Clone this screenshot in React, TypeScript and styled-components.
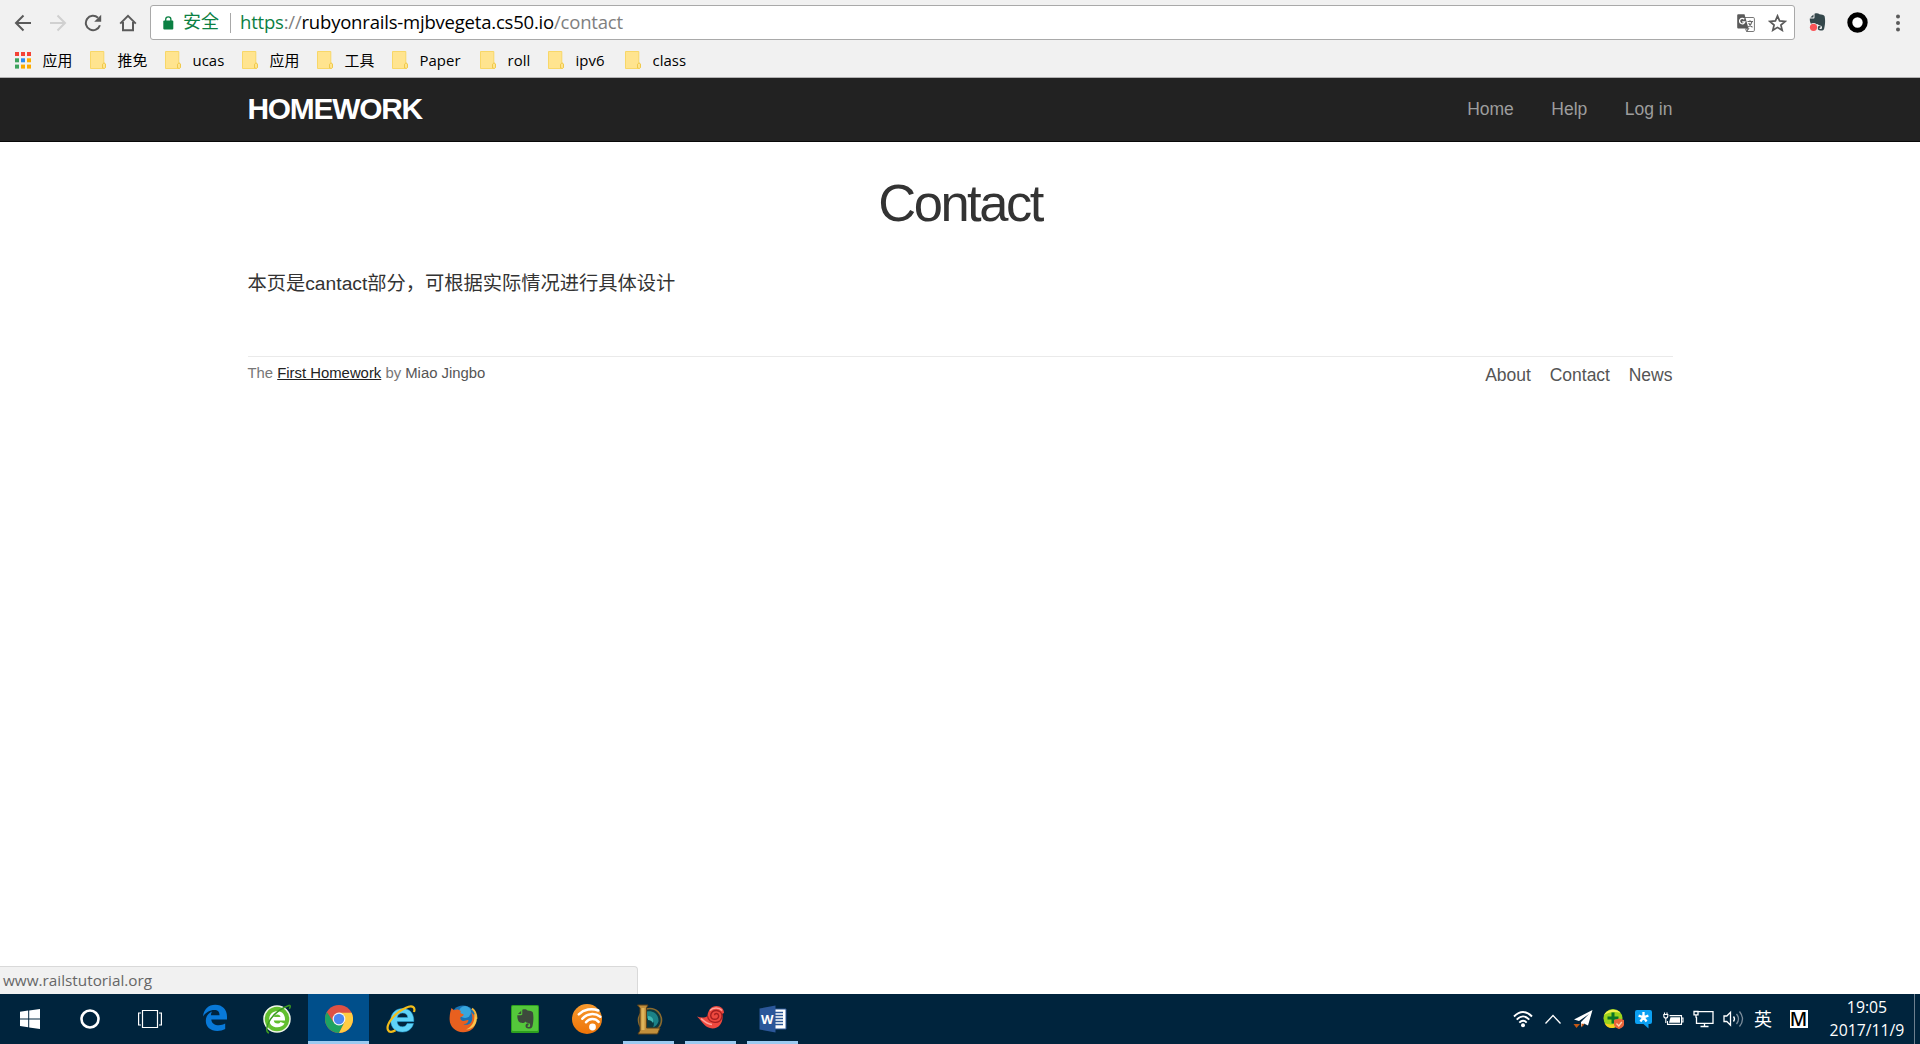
import React from "react";
import styled, { createGlobalStyle } from "styled-components";

const Global = createGlobalStyle`
  * { box-sizing: border-box; }
  html, body { margin: 0; padding: 0; background: #fff; }
  body { overflow: hidden; }
  svg { display: block; flex: none; }
`;

const UI = `"Open Sans", "Noto Sans CJK SC", sans-serif`;
const WEB = `"Liberation Sans", "Noto Sans CJK SC", sans-serif`;

const Screen = styled.div`
  width: 1920px;
  height: 1044px;
  display: flex;
  flex-direction: column;
  background: #fff;
`;

/* ---------- browser chrome ---------- */

const Chrome = styled.header`
  height: 78px;
  flex: none;
  background: #f1f1f1;
  border-bottom: 1px solid #b3b2b3;
  font-family: ${UI};
`;

const Toolbar = styled.div`
  height: 45px;
  display: flex;
  align-items: center;
  padding-left: 14px;
`;

const NavButtons = styled.div`
  display: flex;
  gap: 17px;
  width: 136px;
`;

const Omnibox = styled.div`
  width: 1645px;
  height: 35px;
  display: flex;
  align-items: center;
  padding: 0 7px 0 12px;
  background: #fff;
  border: 1px solid #a9a9a9;
  border-radius: 3px;
`;

const Secure = styled.span`
  margin-left: 9px;
  width: 47px;
  padding-bottom: 2px;
  font-size: 18px;
  line-height: 31px;
  color: #0b8043;
  white-space: nowrap;
`;

const Separator = styled.span`
  width: 1px;
  height: 20px;
  background: #a8a8a8;
  margin-right: 9px;
`;

const Url = styled.span`
  flex: 1;
  padding-bottom: 2px;
  font-size: 18.5px;
  line-height: 31px;
  letter-spacing: -0.2px;
  color: #000;
  white-space: nowrap;
`;

const UrlPart = styled.span<{ $secure?: boolean }>`
  color: ${(p) => (p.$secure ? "#0b8043" : "#808080")};
`;

const OmniActions = styled.div`
  display: flex;
  gap: 13px;
`;

const Extensions = styled.div`
  display: flex;
  align-items: center;
  margin-left: 14px;
`;

const ExtSlot = styled.div<{ $w: number }>`
  width: ${(p) => p.$w}px;
`;

const Bookmarks = styled.nav`
  height: 30px;
  display: flex;
  align-items: center;
  padding-left: 14.5px;
`;

const Bookmark = styled.div<{ $w: number; $latin?: boolean }>`
  width: ${(p) => p.$w}px;
  display: flex;
  align-items: center;
  gap: 12px;
  font-size: 14.9px;
  line-height: 30px;
  letter-spacing: ${(p) => (p.$latin ? "0.05px" : "0")};
  color: #000;
  white-space: nowrap;
`;

/* ---------- web page ---------- */

const Container = styled.div`
  width: 1425px;
  margin: 0 auto;
`;

const Navbar = styled.div`
  height: 64px;
  flex: none;
  background: #222;
  border-bottom: 1px solid #080808;
  font-family: ${WEB};
`;

const NavInner = styled(Container)`
  display: flex;
  justify-content: space-between;
  height: 63px;
`;

const Logo = styled.div`
  font-size: 29.9px;
  font-weight: 700;
  letter-spacing: -1.25px;
  line-height: 62px;
  color: #fff;
`;

const NavLinks = styled.div`
  display: flex;
  gap: 37.5px;
  font-size: 17.5px;
  line-height: 62px;
  color: #9d9d9d;
`;

const Main = styled.main`
  flex: 1;
  display: flex;
  flex-direction: column;
  font-family: ${WEB};
`;

const Title = styled.h1`
  margin: 0;
  padding-top: 32px;
  font-size: 52.5px;
  font-weight: 400;
  letter-spacing: -2.5px;
  line-height: 58px;
  color: #333;
  text-align: center;
`;

const Paragraph = styled.p`
  margin: 36px 0 0;
  font-size: 19.25px;
  line-height: 32px;
  color: #333;
`;

const Footer = styled.footer`
  margin-top: 56px;
  border-top: 1px solid #eaeaea;
  display: flex;
  justify-content: space-between;
  color: #777;
`;

const Credit = styled.small`
  font-size: 14.875px;
  line-height: 32px;
`;

const CreditLink = styled.span<{ $underlined?: boolean }>`
  color: ${(p) => (p.$underlined ? "#222" : "#555")};
  text-decoration: ${(p) => (p.$underlined ? "underline" : "none")};
`;

const FooterLinks = styled.div`
  display: flex;
  gap: 18.75px;
  font-size: 17.5px;
  line-height: 36px;
  color: #555;
`;

const StatusBubble = styled.div`
  margin-top: auto;
  width: 638px;
  height: 28px;
  padding-left: 3px;
  background: #f1f1f1;
  border: 1px solid #d9d9d9;
  border-width: 1px 1px 0 0;
  border-radius: 0 4px 0 0;
  font-family: ${UI};
  font-size: 15.3px;
  line-height: 27px;
  color: #666;
`;

/* ---------- taskbar ---------- */

const Taskbar = styled.div`
  height: 50px;
  flex: none;
  display: flex;
  background: #00243d;
  font-family: ${UI};
  color: #fff;
`;

const SystemButton = styled.div`
  width: 60px;
  display: flex;
  align-items: center;
  justify-content: center;
`;

const Apps = styled.div`
  display: flex;
  flex: 1;
  padding-left: 3px;
`;

const AppButton = styled.div<{ $state?: "open" | "active" }>`
  width: 62px;
  height: 50px;
  display: flex;
  flex-direction: column;
  align-items: center;
  justify-content: space-between;
  padding-top: 10px;
  background: ${(p) => (p.$state === "active" ? "#004f8b" : "transparent")};
  background-clip: padding-box;
  border-left: 1px solid transparent;

  &::after {
    content: "";
    width: ${(p) => (p.$state === "active" ? 61 : 51)}px;
    height: 3px;
    background: ${(p) => (p.$state ? "#9bcaf0" : "transparent")};
  }
`;

const Tray = styled.div`
  display: flex;
  align-items: center;
`;

const TrayItem = styled.div<{ $w: number }>`
  width: ${(p) => p.$w}px;
  display: flex;
  justify-content: center;
  font-size: 18px;
  line-height: 24px;
`;

const ModeBadge = styled.span`
  width: 18px;
  height: 18px;
  background: #fff;
  color: #000;
  font: 600 19px/18px "Open Sans", sans-serif;
  text-align: center;
`;

const Clock = styled.div`
  width: 95px;
  padding-left: 1px;
  text-align: center;
  font-size: 15.8px;
  line-height: 23px;
  white-space: nowrap;
`;

const ShowDesktop = styled.div`
  align-self: stretch;
  width: 6px;
  border-left: 1px solid #6d808f;
`;

/* ---------- toolbar icons ---------- */

const line = { fill: "none", stroke: "#5a5a5a", strokeWidth: 2 } as const;

const BackIcon = ({ faded }: { faded?: boolean }) => (
  <svg width="18" height="18" viewBox="0 0 18 18" transform={faded ? "scale(-1 1)" : undefined}>
    <path d="M17 9H2.5M9.5 1.5L2 9l7.5 7.5" {...line} stroke={faded ? "#d0d0d0" : "#5a5a5a"} />
  </svg>
);
const ReloadIcon = () => (
  <svg width="18" height="18" viewBox="0 0 18 18">
    <path d="M15.9 11.2A7.2 7.2 0 1 1 14 3.8" {...line} />
    <path d="M17.2 0.8v7h-7z" fill="#5a5a5a" />
  </svg>
);
const HomeIcon = () => (
  <svg width="18" height="18" viewBox="0 0 18 18">
    <path d="M1.2 9.6L9 1.8l7.8 7.8M4 8v8.2h10V8" {...line} />
  </svg>
);
const LockIcon = () => (
  <svg width="11" height="14" viewBox="0 0 11 14">
    <rect x="0.3" y="4.5" width="10" height="9" rx="1" fill="#0b8043" />
    <path d="M2.7 5V3.4a2.6 2.6 0 0 1 5.2 0V5" fill="none" stroke="#0b8043" strokeWidth="1.3" />
  </svg>
);
const TranslateIcon = () => (
  <svg width="18" height="18" viewBox="0 0 18 18">
    <path d="M8 3.5h8.2a1.2 1.2 0 0 1 1.2 1.2v11.6a1.2 1.2 0 0 1-1.2 1.2H9.6l-1.2-3" fill="#fff" stroke="#777" />
    <path d="M1.2 0.3h6.3l4 14.2H1.2A1 1 0 0 1 .2 13.500V1.300a1 1 0 0 1 1-1z" fill="#5a5a5a" />
    <path d="M7.300 5.300a2.700 2.700 0 1 0 .6 2.500H5.200" fill="none" stroke="#fff" strokeWidth="1.300" />
    <path d="M10.500 7.500h5.500M13 6.300v1.200M15 7.500c-.6 2.500-2 4.200-3.700 5.500M11.700 9c.8 2 2 3.300 3.800 4.300M9 14.700h2.500l-2 2.800" fill="none" stroke="#666" strokeWidth="1.100" />
  </svg>
);
const StarIcon = () => (
  <svg width="19" height="18" viewBox="0 0 19 18">
    <path d="M9.500 1.900l2.100 5 5.500.5-4.200 3.600 1.300 5.300-4.700-2.900-4.700 2.900 1.300-5.300L1.900 7.400l5.500-.5z" {...line} strokeWidth="1.700" />
  </svg>
);
const elephant =
  "M5.500 0.700C7.500-.1 9.500.3 10.500 1.300c2 .2 4.300.4 5 1.700.9 2.800.8 8.500-.3 12.400-.4 1.700-1.700 2.200-3.700 2.100-2 0-2.900-.9-2.900-2.500 0-1.500 1-2.300 2.900-2.200v1.600c-.7 0-1.100.2-1.100.8 0 .7.500.9 1.400.9.9 0 1.200-.6 1.200-1.800-.2-1.400-1-1.800-2.600-2-.8-.1-1.500-.5-1.800-1.200-1 1.300-2.500 1.500-4.300 1.200C1.700 12 .7 9 .8 5.500h3.500c1 0 1.200-.4 1.200-1.300zM4.500 1.500v2.200c0 .6-.2.800-.8.800H1.300z";
const ClipperIcon = () => (
  <svg width="18" height="20" viewBox="0 0 18 20">
    <path d={elephant} fill="#34474b" />
    <circle cx="4.500" cy="14.300" r="4.300" fill="#f1f1f1" />
    <circle cx="4.500" cy="14.300" r="3.600" fill="#fb5458" />
  </svg>
);
const RingIcon = () => (
  <svg width="21" height="21" viewBox="0 0 21 21">
    <circle cx="10.500" cy="10.500" r="7.700" fill="#fff" stroke="#000" strokeWidth="5" />
  </svg>
);
const DotsIcon = () => (
  <svg width="6" height="18" viewBox="0 0 6 18">
    {[2.5, 9, 15.5].map((y) => (
      <circle key={y} cx="3" cy={y} r="2" fill="#5a5a5a" />
    ))}
  </svg>
);
const AppsIcon = () => (
  <svg width="16" height="17" viewBox="0 0 16 17">
    {["#f44336", "#f44336", "#f44336", "#3da35d", "#2b8cf0", "#fbab00", "#3da35d", "#fbab00", "#fbab00"].map((c, i) => (
      <rect key={i} x={(i % 3) * 6} y={Math.floor(i / 3) * 6.3} width="4" height="4" fill={c} />
    ))}
  </svg>
);
const FolderIcon = () => (
  <svg width="16" height="18" viewBox="0 0 16 18">
    <path d="M.5.5h13.300v11.200l1.700 1.300v3.600l-1 .9H.5z" fill="#ffe48f" stroke="#f8d768" />
    <path d="M12.500 17v-3.800l1.500-1.400 1.500 1.300v3.300l-1 1z" fill="#ffe48f" stroke="#efc94c" />
  </svg>
);

/* ---------- taskbar icons ---------- */

const WindowsIcon = () => (
  <svg width="20" height="20" viewBox="0 0 20 20">
    <path d="M0 2.800L8.200 1.600v7.800H0zM9.200 1.400L20 0v9.400H9.200zM0 10.400h8.200v7.900L0 17.100zM9.200 10.400H20V20L9.200 18.500z" fill="#fff" />
  </svg>
);
const CortanaIcon = () => (
  <svg width="22" height="22" viewBox="0 0 22 22">
    <circle cx="11" cy="11" r="8.500" fill="none" stroke="#fff" strokeWidth="2.600" />
  </svg>
);
const TaskViewIcon = () => (
  <svg width="24" height="20" viewBox="0 0 24 20">
    <path d="M4.500 1.500h15v17h-15zM3 4H.6v12H3M21 4h2.400v12H21" fill="none" stroke="#fff" strokeWidth="1.200" />
  </svg>
);
const EdgeIcon = () => (
  <svg width="26" height="28" viewBox="0 0 26 28">
    <path d="M1 12.500C1.600 5.500 6.500.8 13.200.8 20.500.8 25 5.700 25 12.500v3H9.300c.2 3.800 3.500 5.800 7.500 5.800 2.400 0 4.500-.6 6.400-1.700v5.500c-2.200 1.300-5 1.900-7.900 1.900-6.800 0-11.500-4.300-11.500-10.300 0-4.300 2.300-7.500 6.200-9.300-.7 1.200-1 2.500-1.100 3.900h8.600c.1-3.300-1.500-5.300-5.200-5.300C7.800 6 3.700 8.500 1 12.500z" fill="#0879d8" />
  </svg>
);
const GreenBrowserIcon = () => (
  <svg width="30" height="30" viewBox="0 0 30 30">
    <circle cx="15" cy="15" r="13" fill="#62bf2f" stroke="#f0f7ea" strokeWidth="1.500" />
    <path d="M22.500 19.500C21 22 18.500 23.300 15.300 23.300c-5 0-8.100-3-8.100-7.800 0-5 3.300-8.300 8.100-8.300 5.200 0 8 3.500 7.700 9.300H11.800c.2 1.900 1.500 3 3.700 3 1.400 0 2.400-.5 3-1.500zM12 13h6.500c-.2-1.600-1.300-2.500-3.200-2.500-1.800 0-3 .9-3.300 2.500z" fill="#fff" />
    <path d="M7 29C.5 27 8 8 27.500 1.200M27.500 1.200c1 .4 1 2-.2 3.600" fill="none" stroke="#3b9b22" strokeWidth="1.500" />
  </svg>
);
const ChromeIcon = () => (
  <svg width="28" height="30" viewBox="-14 -15 28 30">
    <circle r="14" fill="#dd5144" />
    <path d="M-12.120-7A14 14 0 0 0 0 14L5.500 3.200H-5.500z" fill="#1ea362" />
    <path d="M0 14A14 14 0 0 0 12.600-6.200H0L5.500 3.200z" fill="#ffcd42" />
    <circle r="6.400" fill="#f4f4f4" />
    <circle r="5.200" fill="#4b87f0" />
  </svg>
);
const IeIcon = () => (
  <svg width="30" height="30" viewBox="0 0 30 30">
    <path d="M27.500 19.500C26 25 22 28 16.500 28 9.500 28 4.700 23.500 4.700 16.500S9.500 4.500 16.500 4.500c7.500 0 11.500 5 11.300 13H11c.3 3.300 2.300 5.300 5.600 5.300 2 0 3.700-1 4.500-3.300zM11.300 13.500h10.400c-.2-2.800-2-4.500-5-4.500s-5 1.700-5.400 4.500z" fill="#5fd3f8" stroke="#2ba6dc" strokeWidth=".5" />
    <path d="M28 8c1.500-4.500-1-7.500-8.500-4C9 8.500-.5 20.500 2 26c1.200 2.800 4.500 2.200 7.500.3" fill="none" stroke="#f3bd19" strokeWidth="2.200" />
  </svg>
);
const FirefoxIcon = () => (
  <svg width="30" height="30" viewBox="0 0 30 30">
    <circle cx="15" cy="14" r="12.500" fill="#1673b5" />
    <circle cx="17" cy="8" r="6" fill="#37a6dd" />
    <path d="M24 4.500c3 2.500 4.600 6 4.300 10.500" fill="none" stroke="#f2b53a" strokeWidth="2" />
    <path d="M3.500 4l2.500 2.300C8.500 5 11 5.500 13 7.500c-1 1-.8 1.700 1 2.200 1.800.3 2.500 1 .8 2.200l-2.300 1.400c-.5 2 .5 3.300 2.800 3.700 2 .3 3.400-1.500 5.300-.8-.7 3-3.200 4-5.300 4 5 2 9-1.200 9-6.200 0-3-.6-4.500-1.500-6 3.500 2.500 5.700 6 5 10.500-1 6-6 9.800-12.800 9.700C7.500 28 1.800 23 1.600 15.500 1.500 11 2.500 6.500 3.500 4z" fill="#e8601f" />
    <path d="M26 9c1.500 7-1 13.500-8 16.500 7-.5 11-5.500 10.800-11z" fill="#f9c54c" />
  </svg>
);
const EvernoteIcon = () => (
  <svg width="28" height="30" viewBox="0 0 28 30">
    <rect x="0" y="1" width="28" height="28" rx="1.500" fill="#2da01f" />
    <rect x="1" y="2" width="26" height="25" rx="1" fill="#54c83b" />
    <g transform="translate(5.500 5) scale(1.050 1.120)">
      <path d={elephant} fill="#3d4a3c" />
    </g>
  </svg>
);
const OrangeWifiIcon = () => (
  <svg width="30" height="30" viewBox="0 0 30 30">
    <defs>
      <linearGradient id="orange" x2="0" y2="1">
        <stop offset="0" stopColor="#f79a2e" />
        <stop offset="1" stopColor="#ee7408" />
      </linearGradient>
    </defs>
    <circle cx="15" cy="15" r="15" fill="url(#orange)" />
    <circle cx="20.500" cy="23" r="3.400" fill="#fff" />
    <path d="M14 18.200A8 8 0 0 1 26.600 17.900M10.300 14.800A13 13 0 0 1 28.300 12.800M6.800 10.300A18.500 18.500 0 0 1 26.300 6.500" fill="none" stroke="#fff" strokeWidth="2.500" strokeLinecap="round" />
  </svg>
);
const LeagueIcon = () => (
  <svg width="28" height="32" viewBox="0 0 28 32">
    <circle cx="15" cy="16" r="11.500" fill="#0b3941" stroke="#8b6a2e" strokeWidth="1.600" />
    <path d="M12 7.500c7-1 12 3.500 11.500 10-1 3-3 5-5.500 6 2-4 1-8-6-9z" fill="#1b8287" />
    <path d="M13 12c4 0 6 3 5 7-1-2-3-3-5-3z" fill="#3fb6b2" />
    <path d="M2.500 1h10.500l-1.500 3v20H25l-2.500 6H3l2-3.500V4z" fill="#c18f3c" stroke="#5b4018" />
    <path d="M6.500 4h3v22h-3z" fill="#dfb45a" />
  </svg>
);
const SnailIcon = () => (
  <svg width="30" height="30" viewBox="0 0 30 30">
    <path d="M1 12.500c4 1.500 8 1.500 10.500-.5C12 6 15.500 2 20.500 2c4.500 0 7.500 3 7.500 7l-2 1c2 6-1.500 14.500-9.500 14.500C9 24 7.500 19 1 12.500z" fill="#ee493f" />
    <path d="M11.500 12c1 8 14 9 14.500 0C26 5 15 4.500 14.700 11.500c.3 5 8 5 8 .3-.4-3-4-3-4.200-.5" fill="none" stroke="#a51f20" strokeWidth="1.400" />
    <path d="M14 6.500c3-3.500 9-3.500 12 0M5 14.500c4 3.500 6 5.500 11 6" fill="none" stroke="#ffa39b" strokeWidth="1.500" />
  </svg>
);
const WordText = styled.text`
  font: 700 13px "Open Sans", sans-serif;
  fill: #fff;
`;
const WordIcon = () => (
  <svg width="28" height="30" viewBox="0 0 28 30">
    <path d="M14 5h13v20H14z" fill="#fff" stroke="#2b5797" strokeWidth="1" />
    <path d="M16 8.500h8M16 11.500h8M16 14.500h8M16 17.500h8M16 20.500h8" stroke="#2b5797" strokeWidth="1.500" />
    <path d="M.5 4.500L16.500 1.500v27L.5 25.500z" fill="#2b579a" />
    <WordText x="2" y="20" textLength="12.500" lengthAdjust="spacingAndGlyphs">W</WordText>
  </svg>
);

/* ---------- tray icons ---------- */

const wire = { fill: "none", stroke: "#fff", strokeWidth: 1.3 } as const;

const WifiIcon = () => (
  <svg width="20" height="18" viewBox="0 0 20 18">
    <path d="M1 6.500q9-9 18 0M3.700 9.600q6.300-6.400 12.600 0M6.300 12.600q3.700-3.700 7.400 0" {...wire} strokeWidth="1.900" />
    <circle cx="10" cy="15.300" r="2" fill="#fff" />
  </svg>
);
const CaretIcon = () => (
  <svg width="18" height="12" viewBox="0 0 18 12">
    <path d="M1.500 10.500L9 2.500l7.500 8" {...wire} />
  </svg>
);
const PlaneIcon = () => (
  <svg width="20" height="18" viewBox="0 0 20 18">
    <path d="M19.500 0L1 9.500l5 1.500L16 4 8 12v5l3-3.500 4 2z" fill="#fff" />
    <path d="M.5 14H7l-3.500 4zM8.500 13.500l3 .8-3 3.200z" fill="#c35714" />
  </svg>
);
const GuardIcon = () => (
  <svg width="21" height="20" viewBox="0 0 21 20">
    <circle cx="10" cy="9.500" r="9.500" fill="#9bd41c" />
    <path d="M1 6C4 0 14-1 17.500 4 12 2 6 3 1 6z" fill="#f5ef4e" />
    <path d="M1.500 14c4 2 10 2 14-1-1 4-4 6-7 6s-6-2-7-5z" fill="#f6d21c" />
    <path d="M10 3.500v11M4.500 9h11" stroke="#0b7427" strokeWidth="3" />
    <path d="M11 11l5-1.500 5 1.500v4.500c0 2-3 4-5 4.500-2-.5-5-2.500-5-4.500z" fill="#e9643a" />
    <path d="M13.500 14.500l2.300 2.500 3-4" fill="none" stroke="#ffd4b0" strokeWidth="1.300" />
  </svg>
);
const BlueStarIcon = () => (
  <svg width="17" height="20" viewBox="0 0 17 20">
    <path d="M2 1h13a2 2 0 0 1 2 2v10a2 2 0 0 1-2 2h-1.500v4.500L8.500 15H2a2 2 0 0 1-2-2V3a2 2 0 0 1 2-2z" fill="#0ba0f2" />
    <path d="M8.500 3v5.300M3.600 6.600l4.900 1.700 4.900-1.700M5.400 12.500l3.100-4.200 3.100 4.200" fill="none" stroke="#fff" strokeWidth="2.300" />
  </svg>
);
const BatteryIcon = () => (
  <svg width="21" height="16" viewBox="0 0 21 16">
    <path d="M6.500 4.600h12v8.800h-14V10M18.500 7h1.500v4h-1.500" {...wire} strokeWidth="1.100" />
    <path d="M7.500 6.300h9.500v5.500H6z" fill="#fff" />
    <path d="M.8 3.500h4v1.500a2 2 0 0 1-4 0zM1.500 1.500v2M4 1.500v2M2.800 7v5" {...wire} strokeWidth="1.100" />
  </svg>
);
const MonitorIcon = () => (
  <svg width="21" height="18" viewBox="0 0 21 18">
    <path d="M5 1.700h15v11.600H3.500V7M11.500 13.300v3M7.500 16.500h8M1 1.500h4v3.300H1zM3 4.800v3" {...wire} />
  </svg>
);
const SpeakerIcon = () => (
  <svg width="21" height="18" viewBox="0 0 21 18">
    <path d="M1 6h2.800L7.500 2.300v12.900L3.800 11.500H1z" {...wire} />
    <path d="M10.500 6.500q2 2.500 0 5" {...wire} />
    <path d="M13.500 4q4 5 0 10M16.500 1.500q6 7.500 0 15" {...wire} stroke="#7a8b9a" />
  </svg>
);

const bookmarks: [string, number][] = [
  ["推免", 75],
  ["ucas", 77],
  ["应用", 75],
  ["工具", 75],
  ["Paper", 88],
  ["roll", 68],
  ["ipv6", 77],
  ["class", 77],
];

const apps: [React.FC, ("open" | "active")?][] = [
  [EdgeIcon],
  [GreenBrowserIcon],
  [ChromeIcon, "active"],
  [IeIcon],
  [FirefoxIcon],
  [EvernoteIcon],
  [OrangeWifiIcon],
  [LeagueIcon, "open"],
  [SnailIcon, "open"],
  [WordIcon, "open"],
];

const tray: [React.FC, number][] = [
  [WifiIcon, 30],
  [CaretIcon, 30],
  [PlaneIcon, 30],
  [GuardIcon, 31],
  [BlueStarIcon, 29],
  [BatteryIcon, 31],
  [MonitorIcon, 29],
  [SpeakerIcon, 30],
];

export default function App() {
  return (
    <Screen>
      <Global />
      <Chrome>
        <Toolbar>
          <NavButtons>
            <BackIcon />
            <BackIcon faded />
            <ReloadIcon />
            <HomeIcon />
          </NavButtons>
          <Omnibox>
            <LockIcon />
            <Secure>安全</Secure>
            <Separator />
            <Url>
              <UrlPart $secure>https</UrlPart>
              <UrlPart>://</UrlPart>rubyonrails-mjbvegeta.cs50.io<UrlPart>/contact</UrlPart>
            </Url>
            <OmniActions>
              <TranslateIcon />
              <StarIcon />
            </OmniActions>
          </Omnibox>
          <Extensions>
            <ExtSlot $w={38}><ClipperIcon /></ExtSlot>
            <ExtSlot $w={48}><RingIcon /></ExtSlot>
            <DotsIcon />
          </Extensions>
        </Toolbar>
        <Bookmarks>
          <Bookmark $w={75}><AppsIcon />应用</Bookmark>
          {bookmarks.map(([label, w], i) => (
            <Bookmark key={i} $w={w} $latin={/[a-z]/.test(label)}>
              <FolderIcon />
              {label}
            </Bookmark>
          ))}
        </Bookmarks>
      </Chrome>

      <Navbar>
        <NavInner>
          <Logo>HOMEWORK</Logo>
          <NavLinks>
            <span>Home</span>
            <span>Help</span>
            <span>Log in</span>
          </NavLinks>
        </NavInner>
      </Navbar>

      <Main>
        <Container>
          <Title>Contact</Title>
          <Paragraph lang="zh-CN">本页是cantact部分，可根据实际情况进行具体设计</Paragraph>
          <Footer>
            <Credit>
              The <CreditLink $underlined>First Homework</CreditLink> by <CreditLink>Miao Jingbo</CreditLink>
            </Credit>
            <FooterLinks>
              <span>About</span>
              <span>Contact</span>
              <span>News</span>
            </FooterLinks>
          </Footer>
        </Container>
        <StatusBubble>www.railstutorial.org</StatusBubble>
      </Main>

      <Taskbar>
        <SystemButton><WindowsIcon /></SystemButton>
        <SystemButton><CortanaIcon /></SystemButton>
        <SystemButton><TaskViewIcon /></SystemButton>
        <Apps>
          {apps.map(([Icon, state], i) => (
            <AppButton key={i} $state={state}>
              <Icon />
            </AppButton>
          ))}
        </Apps>
        <Tray>
          {tray.map(([Icon, w], i) => (
            <TrayItem key={i} $w={w}>
              <Icon />
            </TrayItem>
          ))}
          <TrayItem $w={30}>英</TrayItem>
          <TrayItem $w={41}><ModeBadge>M</ModeBadge></TrayItem>
          <Clock>
            19:05
            <br />
            2017/11/9
          </Clock>
          <ShowDesktop />
        </Tray>
      </Taskbar>
    </Screen>
  );
}
